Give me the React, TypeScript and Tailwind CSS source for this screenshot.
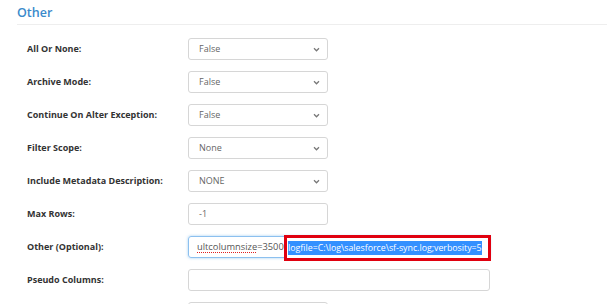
import React from "react";

type Row = {
  label: string;
  kind: "select" | "input";
  value?: string;
};

const rows: Row[] = [
  { label: "All Or None:", kind: "select", value: "False" },
  { label: "Archive Mode:", kind: "select", value: "False" },
  { label: "Continue On Alter Exception:", kind: "select", value: "False" },
  { label: "Filter Scope:", kind: "select", value: "None" },
  { label: "Include Metadata Description:", kind: "select", value: "NONE" },
  { label: "Max Rows:", kind: "input", value: "-1" },
];

const Chevron = () => (
  <svg width="7" height="5" viewBox="0 0 8 6" className="text-[#777]">
    <path d="M1 1.5 L4 4.5 L7 1.5" fill="none" stroke="currentColor" strokeWidth="1.5" />
  </svg>
);

const Label = ({ text }: { text: string }) => (
  <div className="w-[161px] shrink-0 text-[9px] font-bold text-[#333]">{text}</div>
);

export default function App() {
  return (
    <div
      className="w-[607px] h-[304px] overflow-hidden bg-white"
      style={{ fontFamily: '"Open Sans", "Noto Sans", sans-serif' }}
    >
      {/* Section Heading */}
      <div className="ml-[17px] h-[25px] border-b border-[#eeeeee] pt-[4px] text-[12.5px] font-semibold text-[#3a8acb]">
        Other
      </div>

      {/* Form rows */}
      <div className="flex flex-col gap-[11px] pl-[27px] pt-[13px]">
        {rows.map((row) => (
          <div key={row.label} className="flex items-center h-[22px]">
            <Label text={row.label} />
            <div className="flex h-[22px] w-[140px] items-center justify-between rounded-[3px] border border-[#d6d6d6] pl-[10px] pr-[7px] text-[9px] text-[#666]">
              <span>{row.value}</span>
              {row.kind === "select" && <Chevron />}
            </div>
          </div>
        ))}

        {/* Other (Optional) - focused input with annotation */}
        <div className="flex items-center h-[22px]">
          <Label text="Other (Optional):" />
          <div className="relative flex h-[22px] w-[302px] items-center rounded-[3px] border border-[#8cc0ef] pl-[8px] text-[9.3px] text-[#555] shadow-[0_0_3px_rgba(102,175,233,0.6)]">
            <span className="underline decoration-dotted decoration-[#e02020] decoration-1 underline-offset-2">ultcolumnsize</span>
            <span>=35000</span>
            <div className="absolute left-[95px] top-[-2px] flex h-[26px] w-[207px] items-center overflow-hidden border-[3px] border-[#e0000f] bg-white pl-[1px]">
              <span className="whitespace-nowrap bg-[#3390ff] text-[8.8px] leading-[14px] text-white">
                logfile=C:\log\salesforce\sf-sync.log;verbosity=5
              </span>
            </div>
          </div>
        </div>

        <div className="flex items-center h-[22px]">
          <Label text="Pseudo Columns:" />
          <div className="h-[22px] w-[302px] rounded-[3px] border border-[#d6d6d6]" />
        </div>

        <div className="flex items-center h-[22px]">
          <Label text="" />
          <div className="h-[22px] w-[140px] rounded-[3px] border border-[#d6d6d6]" />
        </div>
      </div>
    </div>
  );
}
